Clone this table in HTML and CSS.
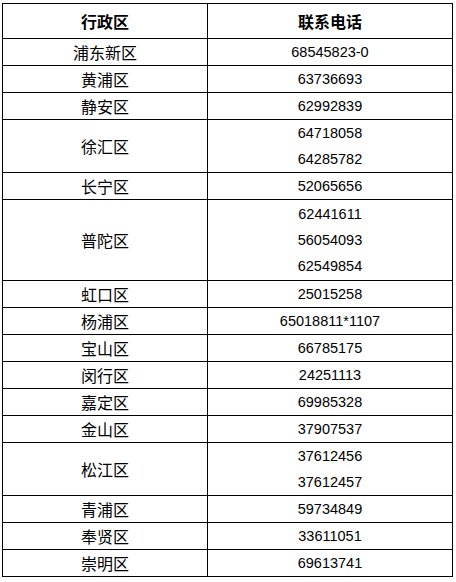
FILE: index.html
```html
<!DOCTYPE html>
<html lang="zh-CN">
<head>
<meta charset="utf-8">
<title>联系电话</title>
<link rel="stylesheet" href="styles.css">
</head>
<body>
<table class="phones">
  <colgroup><col class="c-district"><col class="c-phone"></colgroup>
  <thead>
    <tr><th>行政区</th><th>联系电话</th></tr>
  </thead>
  <tbody>
    <tr><td>浦东新区</td><td class="num"><div>68545823-0</div></td></tr>
    <tr><td>黄浦区</td><td class="num"><div>63736693</div></td></tr>
    <tr><td>静安区</td><td class="num"><div>62992839</div></td></tr>
    <tr><td>徐汇区</td><td class="num"><div>64718058</div><div>64285782</div></td></tr>
    <tr><td>长宁区</td><td class="num"><div>52065656</div></td></tr>
    <tr><td>普陀区</td><td class="num tri"><div>62441611</div><div>56054093</div><div>62549854</div></td></tr>
    <tr><td>虹口区</td><td class="num"><div>25015258</div></td></tr>
    <tr><td>杨浦区</td><td class="num"><div>65018811*1107</div></td></tr>
    <tr><td>宝山区</td><td class="num"><div>66785175</div></td></tr>
    <tr><td>闵行区</td><td class="num"><div>24251113</div></td></tr>
    <tr><td>嘉定区</td><td class="num"><div>69985328</div></td></tr>
    <tr><td>金山区</td><td class="num"><div>37907537</div></td></tr>
    <tr><td>松江区</td><td class="num"><div>37612456</div><div>37612457</div></td></tr>
    <tr><td>青浦区</td><td class="num"><div>59734849</div></td></tr>
    <tr><td>奉贤区</td><td class="num"><div>33611051</div></td></tr>
    <tr><td>崇明区</td><td class="num"><div>69613741</div></td></tr>
  </tbody>
</table>
</body>
</html>
```

FILE: styles.css
```css
html, body {
  margin: 0;
  padding: 0;
  background: #fff;
}

body {
  padding: 3px 0 0 2px;
  font-family: "Noto Sans CJK SC", "Noto Sans", sans-serif;
  color: #000;
}

.phones {
  table-layout: fixed;
  width: 450px;
  border-collapse: separate;
  border-spacing: 0;
  border-top: 1px solid #000;
  border-left: 1px solid #000;
}

.c-district { width: 205px; }
.c-phone { width: 245px; }

.phones th,
.phones td {
  padding: 0;
  text-align: center;
  vertical-align: middle;
  border-right: 1px solid #000;
  border-bottom: 1px solid #000;
  font-size: 16px;
  line-height: 26px;
  font-weight: normal;
}

.phones th {
  height: 34px;
  font-weight: bold;
}

.phones td.num {
  font-family: "Liberation Sans", "Noto Sans", sans-serif;
  font-size: 14.5px;
}

.phones td.num div {
  height: 26px;
  line-height: 26px;
}

.phones td.tri {
  padding: 1px 0;
}
```
